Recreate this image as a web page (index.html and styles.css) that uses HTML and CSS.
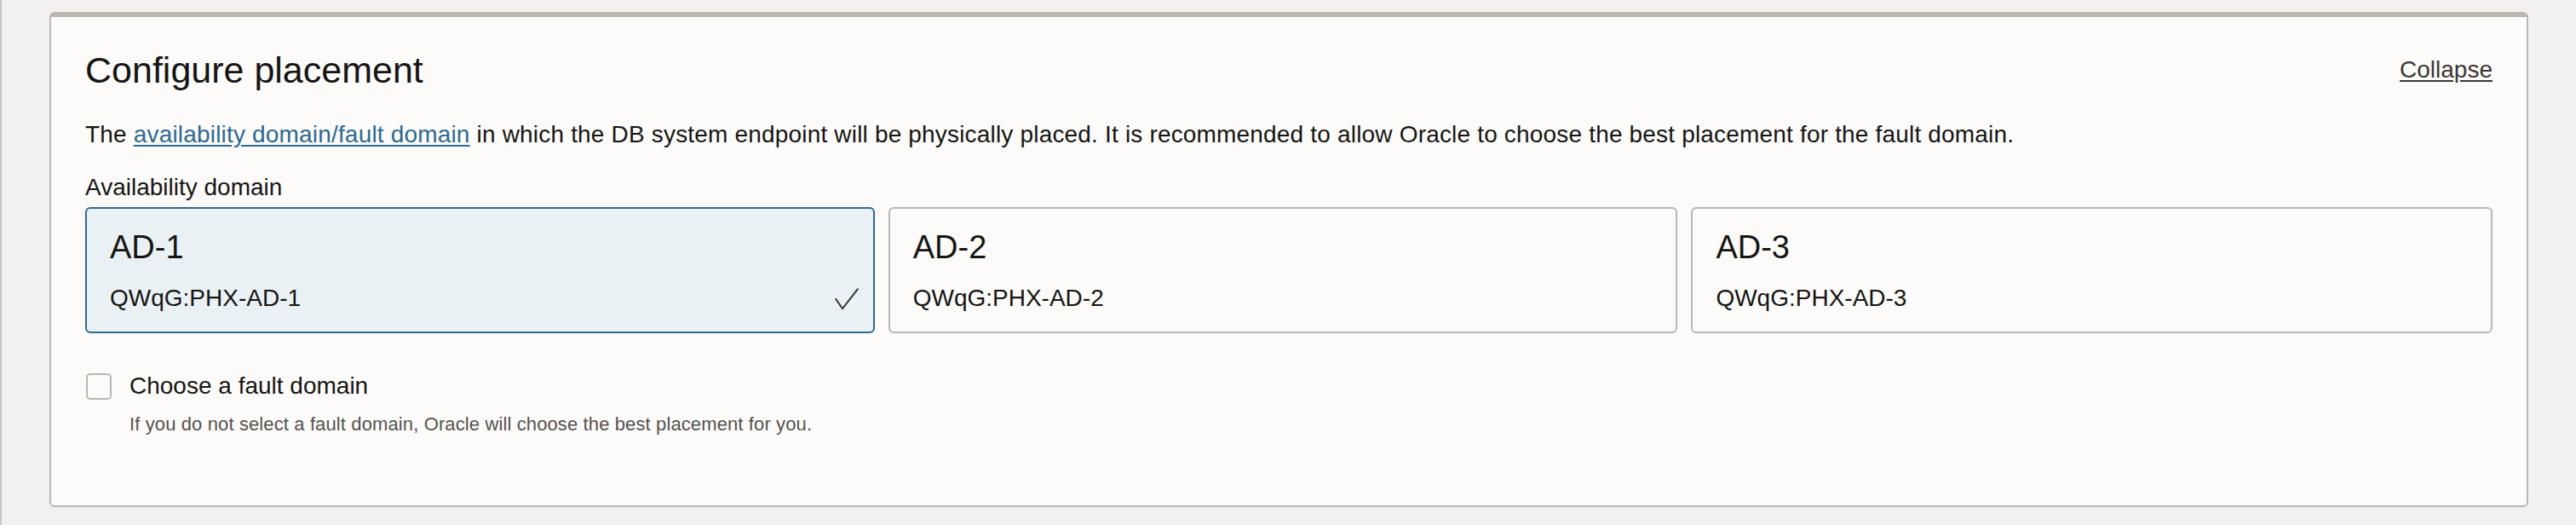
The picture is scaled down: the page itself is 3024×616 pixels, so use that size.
FILE: index.html
```html
<!DOCTYPE html>
<html lang="en">
<head>
<meta charset="utf-8">
<title>Configure placement</title>
<link rel="stylesheet" href="styles.css">
</head>
<body>
<div class="page">
  <section class="panel">
    <header class="panel-head">
      <h2 class="panel-title">Configure placement</h2>
      <a class="collapse-link" href="#">Collapse</a>
    </header>
    <p class="panel-desc">The <a class="doc-link" href="#">availability domain/fault domain</a> in which the DB system endpoint will be physically placed. It is recommended to allow Oracle to choose the best placement for the fault domain.</p>
    <div class="field-label">Availability domain</div>
    <div class="ad-grid" role="radiogroup">
      <div class="ad-card is-selected" role="radio" aria-checked="true">
        <div class="ad-name">AD-1</div>
        <div class="ad-row">
          <span class="ad-id">QWqG:PHX-AD-1</span>
          <svg class="ad-check" width="28" height="27" viewBox="0 0 28 27" aria-hidden="true"><polyline points="0.8,13.3 9,25 27.3,1.7" fill="none" stroke="#3b3835" stroke-width="2"/></svg>
        </div>
      </div>
      <div class="ad-card" role="radio" aria-checked="false">
        <div class="ad-name">AD-2</div>
        <div class="ad-row"><span class="ad-id">QWqG:PHX-AD-2</span></div>
      </div>
      <div class="ad-card" role="radio" aria-checked="false">
        <div class="ad-name">AD-3</div>
        <div class="ad-row"><span class="ad-id">QWqG:PHX-AD-3</span></div>
      </div>
    </div>
    <label class="check-row">
      <span class="check-box"></span>
      <span class="check-text">Choose a fault domain</span>
    </label>
    <p class="help">If you do not select a fault domain, Oracle will choose the best placement for you.</p>
  </section>
</div>
</body>
</html>
```
FILE: styles.css
```css
html, body {
  margin: 0;
  padding: 0;
}

body {
  background: #f2f1ef;
  font-family: "Liberation Sans", Arial, Helvetica, sans-serif;
  color: #161513;
}

.page {
  box-sizing: border-box;
  min-height: 100vh;
  border-left: 2px solid #c9c5c1;
  padding: 14px 56px 0 56px;
}

.panel {
  background: #fcfbfa;
  border: 2px solid #bcb6b1;
  border-top-width: 6px;
  border-radius: 6px;
  padding: 36px 40px 79px 40px;
}

.panel-head {
  display: flex;
  align-items: center;
  justify-content: space-between;
}

.panel-title {
  margin: 0;
  font-size: 43px;
  line-height: 52px;
  font-weight: 400;
  color: #161513;
}

.collapse-link {
  font-size: 28px;
  line-height: 40px;
  color: #3a3734;
  text-decoration: underline;
  text-underline-offset: 3px;
}

.panel-desc {
  margin: 30px 0 0 0;
  font-size: 28px;
  line-height: 40px;
  letter-spacing: 0.18px;
}

.doc-link {
  color: #2d6a8f;
  text-decoration: underline;
  text-underline-offset: 3px;
}

.field-label {
  margin-top: 22px;
  font-size: 28px;
  line-height: 40px;
}

.ad-grid {
  margin-top: 3px;
  display: grid;
  grid-template-columns: 1fr 1fr 1.015fr;
  gap: 16px;
}

.ad-card {
  border: 2px solid #bcb6b1;
  border-radius: 6px;
  background: #fcfbfa;
  padding: 22px 17px 19px 27px;
}

.ad-card.is-selected {
  border-color: #2d6a8f;
  background: #eaf1f5;
}

.ad-name {
  font-size: 38px;
  line-height: 46px;
}

.ad-row {
  margin-top: 17px;
  height: 40px;
  display: flex;
  align-items: center;
  justify-content: space-between;
}

.ad-id {
  font-size: 28px;
  line-height: 40px;
}

.ad-check {
  display: block;
}

.check-row {
  margin-top: 42px;
  display: flex;
  align-items: center;
  height: 40px;
}

.check-box {
  box-sizing: border-box;
  width: 30px;
  height: 31px;
  border: 2px solid #bcb6b1;
  border-radius: 5px;
  background: #fcfbfa;
  margin-left: 1px;
  margin-right: 21px;
}

.check-text {
  font-size: 28px;
  line-height: 40px;
}

.help {
  margin: 9px 0 0 52px;
  font-size: 22px;
  line-height: 32px;
  letter-spacing: 0.12px;
  color: #55524e;
}
```
